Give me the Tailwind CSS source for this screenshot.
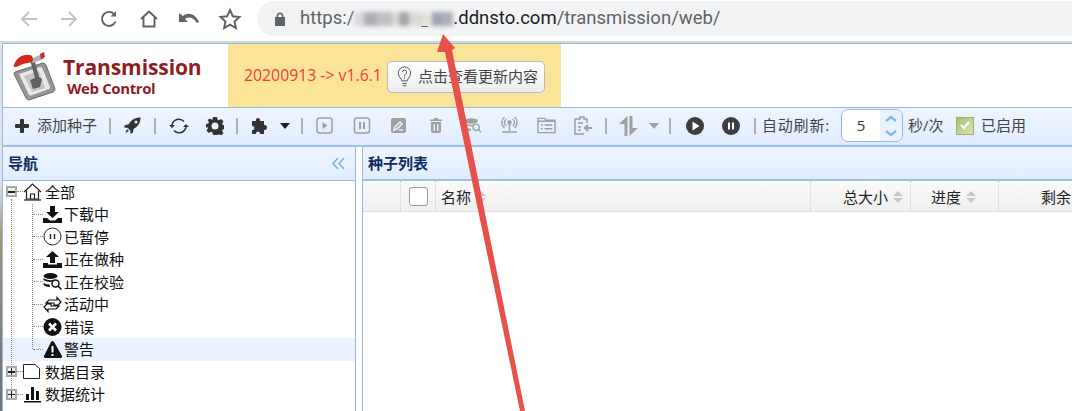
<!DOCTYPE html>
<html lang="en">
<head>
  <meta charset="UTF-8">
  <title>Transmission Web Control</title>
  <script src="https://cdn.jsdelivr.net/npm/@tailwindcss/browser@4"></script>
</head>
<body class="relative w-[1072px] h-[411px] overflow-hidden bg-white font-['Open_Sans','Noto_Sans_CJK_SC',sans-serif]">
  <!-- browser bar -->
  <div class="flex h-[41px] items-start pt-px bg-white">
    <div class="flex w-[257px] h-[35px] items-center text-[#5f6368]">
      <svg class="ml-[19px] w-[20px] h-[20px]" viewBox="0 0 20 20" fill="none" stroke="#bdc1c6" stroke-width="1.8"><path d="M18 10H3M10 3l-7 7 7 7"/></svg>
      <svg class="ml-[20px] w-[20px] h-[20px]" viewBox="0 0 20 20" fill="none" stroke="#bdc1c6" stroke-width="1.8"><path d="M2 10h15M10 3l7 7-7 7"/></svg>
      <svg class="ml-[20px] w-[20px] h-[20px]" viewBox="0 0 20 20" fill="none" stroke="#5f6368" stroke-width="1.9"><path d="M16.5 12.5A7 7 0 1 1 15 5"/><path d="M17 2v5.500h-5.500" fill="#5f6368" stroke="none"/></svg>
      <svg class="ml-[20px] w-[20px] h-[20px]" viewBox="0 0 20 20" fill="none" stroke="#5f6368" stroke-width="1.9"><path d="M2 10l8-7.500L18 10M4.500 8v9.500h11V8"/></svg>
      <svg class="ml-[18px] w-[24px] h-[20px]" viewBox="0 0 24 20" fill="#5f6368"><path d="M2 4v9h9L8 10c4-3 9-1 12 4l2-1C19 6 12 2 6 7z"/></svg>
      <svg class="ml-[17px] w-[24px] h-[24px]" viewBox="0 0 24 24" fill="none" stroke="#5f6368" stroke-width="2"><path d="M12 3l2.800 6.200 6.700.7-5 4.600 1.400 6.600L12 17.700l-5.900 3.400 1.400-6.600-5-4.600 6.700-.7z"/></svg>
    </div>
    <div class="flex flex-1 h-[35px] items-center rounded-l-full bg-[#f1f3f4] pl-[17px] text-[18.500px] font-['Roboto',sans-serif]">
      <svg class="w-[12px] h-[14px] mr-[14px]" viewBox="0 0 12 14" fill="#5f6368"><path d="M2.500 5V4a3.500 3.500 0 0 1 7 0v1H11v9H1V5zM4 5h4V4a2 2 0 0 0-4 0z"/></svg>
      <span class="text-[#5f6368]">https:/</span>
      <span class="relative w-[99px] h-[16px]">
        <span class="flex h-[14px] mt-px blur-[2px]">
          <span class="w-[10px] bg-[#d8d8dc]"></span>
          <span class="w-[13px] bg-[#aeaeb6]"></span>
          <span class="w-[15px] bg-[#c2bec2]"></span>
          <span class="w-[7px] bg-[#dadada]"></span>
          <span class="w-[10px] bg-[#a6a6a6]"></span>
          <span class="w-[13px] bg-[#dadad6]"></span>
          <span class="w-[10px] bg-[#e6e1da]"></span>
          <span class="w-[10px] bg-[#9ea6b2]"></span>
          <span class="w-[11px] bg-[#aeaeb6]"></span>
        </span>
        <span class="absolute left-[67px] top-[15px] w-[7px] h-px bg-[#666]"></span>
      </span>
      <span class="text-[#202124]">.ddnsto.com</span><span class="text-[#5f6368]">/transmission/web/</span>
    </div>
  </div>
  <div class="h-[2px] bg-[#d4d6d8]"></div>

  <div class="flex">
    <div class="w-[2px] h-[368px] bg-gradient-to-b from-[#e0e4e8] from-[38%] via-[#9c9a72] via-[52%] to-[#6f7270]"></div>
    <div class="w-[1070px] border-l border-[#95b8e7]">
      <!-- header -->
      <div class="flex h-[65px] border-y border-[#95b8e7] bg-white">
        <div class="flex w-[225px] items-center">
          <svg class="ml-[9px] w-[44px] h-[52px] blur-[0.300px]" viewBox="0 0 44 52">
            <path d="M3 22l28-9q2 0 3 2l9 24q0 2-2 3L17 50q-2 0-3-2L2 24q0-1 1-2z" fill="#969696" stroke="#6a6a6a" stroke-width="1"/>
            <path d="M7 24l21-7q2 0 2.500 1.500L38 37q0 1.500-1 2l-18 6.500q-2 0-2.500-1.500z" fill="#e8e8e8"/>
            <path d="M12 26l15-5 6 17-13 4z" fill="#c4c4c4"/>
            <path d="M18 10l4-2 5 19 3 2-2 8-7 2-3-9 5-2z" fill="#626262"/>
            <path d="M19 9l11-5 2 5-12 4z" fill="#b0b0b0"/>
            <path d="M2 15C4 8 11 4 17 5c3 0 4 2 4 5l-1 2-9 2c-3 1-6 3-8 3q-2 0-1-2z" fill="#d5281f"/>
            <path d="M28 4l4-2 1 5-4 2z" fill="#cc2a22"/>
          </svg>
          <div class="ml-[7px] mt-[2px] flex flex-col font-bold text-[#8f1d1f]">
            <span class="text-[21px] leading-[24px] tracking-[-0.1px]">Transmission</span>
            <span class="ml-[4px] text-[15px] leading-[19px] tracking-[-0.4px]">Web Control</span>
          </div>
        </div>
        <div class="flex w-[333px] items-center bg-[#fbe397] pl-[16px]">
          <span class="w-[143px] whitespace-nowrap text-[15.800px] text-[#f33a3a]">20200913 -&gt; v1.6.1</span>
          <div class="mt-[2px] flex h-[32px] w-[158px] items-center rounded-[5px] border border-[#bbb] bg-gradient-to-b from-white to-[#ededed]">
            <svg class="ml-[9px] w-[15px] h-[22px]" viewBox="0 0 16 25" fill="none" stroke="#444" stroke-width="1"><path d="M5 17c0-3-4-4-4-9a7 7 0 0 1 14 0c0 5-4 6-4 9zM5.500 20h5M6 22.500h4"/><path d="M5.500 7a2.500 2.500 0 1 1 3.500 2.500c-1 .5-1 1-1 2.500M8 13v1.500"/></svg>
            <span class="ml-[6px] text-[15px] text-[#444]">点击查看更新内容</span>
          </div>
        </div>
      </div>

      <!-- toolbar -->
      <div class="flex h-[39px] items-center border-b-2 border-[#a0bde8] bg-gradient-to-b from-[#eff5ff] to-[#e0ecff] pb-[2px] text-[15px] text-[#444]">
        <svg class="ml-[12px] w-[14px] h-[14px]" viewBox="0 0 14 14" fill="#333"><path d="M5 1q0-1 1-1h2q1 0 1 1v4h4q1 0 1 1v2q0 1-1 1H9v4q0 1-1 1H6q-1 0-1-1V9H1q-1 0-1-1V6q0-1 1-1h4z"/></svg>
        <span class="ml-[8px]">添加种子</span>
        <span class="ml-[12px] w-[2px] h-[16px] bg-[#b0aea8]"></span>
        <svg class="ml-[13px] w-[17px] h-[17px]" viewBox="0 0 17 17" fill="#333"><path d="M16.500.500C11 .500 7 3 4.500 7.500L1 8 0 10.500l3.500.2 2.800 2.800.2 3.500L9 15.500l.5-3.500C14 9.500 16.500 6 16.500.500zM12 3.500a1.500 1.500 0 1 1 0 3 1.500 1.500 0 0 1 0-3zM3 12l2 2-3.500 2z"/></svg>
        <span class="ml-[13px] w-[2px] h-[16px] bg-[#b0aea8]"></span>
        <svg class="ml-[13px] w-[20px] h-[18px]" viewBox="0 0 20 18" fill="none" stroke="#333" stroke-width="1.500"><path d="M3 8a7 7 0 0 1 12-3.500M17 10a7 7 0 0 1-12 3.500"/><path d="M0 8h6l-3 3zM14 10h6l-3-3z" fill="#333" stroke="none"/></svg>
        <svg class="ml-[17px] w-[18px] h-[18px]" viewBox="0 0 18 18" fill="#333"><path fill-rule="evenodd" d="M7 0h4l.5 2.500 1.500.7 2.200-1.300 2.300 2.600-1.400 2 .5 1.500 2.400.5v3.500l-2.400.5-.5 1.500 1.400 2-2.300 2.600-2.200-1.300-1.500.7L11 18H7l-.5-2.500-1.500-.7-2.200 1.300L.5 13.500l1.400-2-.5-1.500L0 10.500V7l2.400-.5.5-1.500-1.400-2L3.800 1.500 6 2.800l.5-.3zM9 5.500a3.500 3.500 0 1 0 0 7 3.500 3.500 0 0 0 0-7z"/></svg>
        <span class="ml-[12px] w-[2px] h-[16px] bg-[#b0aea8]"></span>
        <svg class="ml-[13px] w-[19px] h-[19px]" viewBox="0 0 19 19" fill="#333"><path d="M1 5h4c-1-4 5-4 4 0h4v4c4-1 4 6 0 5v4H9c1-3-5-3-4 0H1v-4c3 1 3-5 0-4z"/></svg>
        <span class="ml-[10px] w-0 h-0 border-x-[5.500px] border-t-[6px] border-x-transparent border-t-[#222]"></span>
        <span class="ml-[11px] w-[2px] h-[16px] bg-[#b0aea8]"></span>
        <svg class="ml-[13px] w-[17px] h-[17px]" viewBox="0 0 17 17" fill="none" stroke="#a0a0a0" stroke-width="1.500"><rect x="1" y="1" width="15" height="15" rx="2.500"/><path d="M6.500 5l5 3.500-5 3.500z" fill="#a0a0a0" stroke="none"/></svg>
        <svg class="ml-[20px] w-[18px] h-[17px]" viewBox="0 0 17 17" fill="none" stroke="#a0a0a0" stroke-width="1.500"><rect x="1" y="1" width="15" height="15" rx="2.500"/><path d="M6.500 5v7M10.500 5v7" stroke-width="2"/></svg>
        <svg class="ml-[20px] w-[15px] h-[15px]" viewBox="0 0 15 15"><rect width="15" height="15" rx="2" fill="#a0a0a0"/><path d="M3 12l1-3 5-5 2 2-5 5zM8 12h4" stroke="#eaf1ff" stroke-width="1.500" fill="none"/></svg>
        <svg class="ml-[24px] w-[12px] h-[15px]" viewBox="0 0 12 15" fill="#a0a0a0"><path d="M0 1.500h4V0h4v1.500h4V3H0zM1 4h10v9q0 2-2 2H3q-2 0-2-2zM3.500 6v7h1.500V6zM7 6v7h1.500V6z"/></svg>
        <svg class="ml-[22px] w-[18px] h-[15px]" viewBox="0 0 20 16" fill="#a0a0a0"><ellipse cx="8" cy="3" rx="7.500" ry="3"/><path d="M.5 5c2 2 8 3 11 1.500L9 9C5 9 2 8 .5 7zM.5 10c2 1 5 1.500 7 1.500L8 14c-4 0-7-1-7.500-2.500z"/><circle cx="13.500" cy="10" r="3.500" fill="none" stroke="#a0a0a0" stroke-width="1.500"/><path d="M16 12.500l3 3" stroke="#a0a0a0" stroke-width="1.500"/></svg>
        <svg class="ml-[19px] w-[17px] h-[17px]" viewBox="0 0 17 17" fill="none" stroke="#a0a0a0" stroke-width="1.400"><circle cx="8.500" cy="5.500" r="1.500" fill="#a0a0a0"/><path d="M5.500 9a4 4 0 0 1 0-7M11.500 9a4 4 0 0 0 0-7M3.500 11a7 7 0 0 1 0-11M13.500 11a7 7 0 0 0 0-11M8.500 7v7M1 15h15"/></svg>
        <svg class="ml-[19px] w-[19px] h-[17px]" viewBox="0 0 20 17" fill="none" stroke="#a0a0a0" stroke-width="1.500"><path d="M1 16V1h7l1.500 2H19v13zM1 4h18"/><path d="M4 8h2M4 12h2M8 8h8M8 12h8"/></svg>
        <svg class="ml-[18px] w-[18px] h-[19px]" viewBox="0 0 18 19" fill="none" stroke="#a0a0a0" stroke-width="1.500"><path d="M13 7V3h-3V1H6v2H1v15h9M4 7h5M4 11h3M4 14h3"/><path d="M18 12h-7M14 9l-3 3 3 3" stroke-width="2"/></svg>
        <span class="ml-[13px] w-[2px] h-[16px] bg-[#b0aea8]"></span>
        <svg class="ml-[12px] w-[19px] h-[20px]" viewBox="0 0 19 20" fill="#a0a0a0"><path d="M8.500 0v20h-3V8H0zM10.500 0h3v12H19l-8.500 8z"/></svg>
        <span class="ml-[11px] w-0 h-0 border-x-[5.500px] border-t-[6px] border-x-transparent border-t-[#a0a0a0]"></span>
        <span class="ml-[10px] w-[2px] h-[16px] bg-[#b0aea8]"></span>
        <svg class="ml-[15px] w-[18px] h-[18px]" viewBox="0 0 18 18"><circle cx="9" cy="9" r="9" fill="#3d3d3d"/><path d="M6.500 4.500l7 4.500-7 4.500z" fill="#fff"/></svg>
        <svg class="ml-[18px] w-[18px] h-[18px]" viewBox="0 0 18 18"><circle cx="9" cy="9" r="9" fill="#3d3d3d"/><path d="M7 5.500v7M11 5.500v7" stroke="#fff" stroke-width="2"/></svg>
        <span class="ml-[14px] w-[2px] h-[16px] bg-[#b0aea8]"></span>
        <span class="ml-[6px] w-[79px] whitespace-nowrap tracking-[0.8px]">自动刷新:</span>
        <div class="flex h-[33px] w-[62px] rounded-[7px] border border-[#95b8e7] bg-white overflow-hidden">
          <span class="flex-1 text-center leading-[31px] text-[#333]">5</span>
          <div class="flex w-[22px] flex-col items-center justify-center gap-[8px] bg-[#e9f1fd]">
            <svg class="w-[12px] h-[7px]" viewBox="0 0 12 7" fill="none" stroke="#7db8ee" stroke-width="2.400"><path d="M1 6l5-4 5 4"/></svg>
            <svg class="w-[12px] h-[7px]" viewBox="0 0 12 7" fill="none" stroke="#7db8ee" stroke-width="2.400"><path d="M1 1l5 4 5-4"/></svg>
          </div>
        </div>
        <span class="ml-[5px] w-[48px]">秒/次</span>
        <div class="flex w-[18px] h-[18px] items-center justify-center border border-[#9db26f] bg-gradient-to-br from-[#a7c06f] to-[#d9e5b8]">
          <svg class="w-[12px] h-[11px]" viewBox="0 0 12 11" fill="none" stroke="#fff" stroke-width="2"><path d="M2 5l3 3 5-6"/></svg>
        </div>
        <span class="ml-[7px]">已启用</span>
      </div>

      <!-- panels -->
      <div class="flex">
        <div class="relative w-[353px] h-[264px] border-r border-[#95b8e7]">
          <div class="flex h-[34px] items-center justify-between border-b border-[#95b8e7] bg-gradient-to-b from-[#eff5ff] to-[#e0ecff] pl-[5px] pr-[10px]">
            <span class="text-[15px] font-bold text-[#0e2d5f]">导航</span>
            <svg class="w-[13px] h-[13px]" viewBox="0 0 13 13" fill="none" stroke="#6fa8e6" stroke-width="1.300"><path d="M6 1L1 6.500 6 12M12 1L7 6.500l5 5.500"/></svg>
          </div>
          <!-- tree connector lines -->
          <div class="absolute left-[8px] top-[52px] h-[196px] border-l border-dotted border-[#888]"></div>
          <div class="absolute left-[29px] top-[57px] h-[145px] border-l border-dotted border-[#888]"></div>
          <div class="-mt-[0.500px] flex flex-col text-[15px] text-[#111]">
            <div class="flex h-[22.500px] items-center">
              <span class="relative ml-[3px] flex w-[11px] h-[11px] items-center justify-center border-2 border-[#aaa] bg-[#eee]"><span class="w-[7px] h-[1.500px] bg-[#222]"></span></span>
              <span class="w-[6px] border-t border-dotted border-[#888]"></span>
              <svg class="w-[19px] h-[18px]" viewBox="0 0 19 18" fill="none" stroke="#222" stroke-width="1.200"><path d="M1 9l8.500-8L18 9M3.500 8v8h12V8M7.500 16v-5h4v5"/><path d="M1 17h17"/></svg>
              <span class="ml-[3px]">全部</span>
            </div>
            <div class="flex h-[22.500px] items-center">
              <span class="ml-[30px] w-[10px] border-t border-dotted border-[#888]"></span>
              <svg class="w-[19px] h-[17px]" viewBox="0 0 19 17" fill="#111"><path d="M7 0h5v6h4l-6.500 6L3 6h4zM0 12h4l3 2.500h5L15 12h4v5H0z"/></svg>
              <span class="ml-[2px]">下载中</span>
            </div>
            <div class="flex h-[22.500px] items-center">
              <span class="ml-[30px] w-[10px] border-t border-dotted border-[#888]"></span>
              <svg class="w-[19px] h-[19px]" viewBox="0 0 19 19" fill="none" stroke="#222" stroke-width="1"><circle cx="9.500" cy="9.500" r="8.500"/><path d="M7.500 7v5M11.500 7v5" stroke-width="1.400"/></svg>
              <span class="ml-[2px]">已暂停</span>
            </div>
            <div class="flex h-[22.500px] items-center">
              <span class="ml-[30px] w-[10px] border-t border-dotted border-[#888]"></span>
              <svg class="w-[19px] h-[17px]" viewBox="0 0 19 17" fill="#111"><path d="M9.500 0L16 6h-4v6H7V6H3zM0 12h5v1.500h9V12h5v5H0z"/></svg>
              <span class="ml-[2px]">正在做种</span>
            </div>
            <div class="flex h-[22.500px] items-center">
              <span class="ml-[30px] w-[10px] border-t border-dotted border-[#888]"></span>
              <svg class="w-[19px] h-[17px]" viewBox="0 0 19 17" fill="#111"><ellipse cx="7.500" cy="3" rx="7" ry="3"/><path d="M.5 5c2 2 8 3 11 1.500L8 9C5 9 2 8 .5 7zM.5 10c2 1 4 1.500 6 1.500L7 14c-4 0-6-1-6.500-2.500z"/><circle cx="12.500" cy="10.500" r="3.500" fill="none" stroke="#111" stroke-width="1.500"/><path d="M15 13l3.500 3.500" stroke="#111" stroke-width="1.500"/></svg>
              <span class="ml-[2px]">正在校验</span>
            </div>
            <div class="flex h-[22.500px] items-center">
              <span class="ml-[30px] w-[10px] border-t border-dotted border-[#888]"></span>
              <svg class="w-[19px] h-[17px]" viewBox="0 0 19 17" fill="none" stroke="#111" stroke-width="1.200"><path d="M4 8L1 11l4 4.500V13h8l3-3h-8V8zM15 9l3-3-4-4.500V4H6L3 7h8v2z"/></svg>
              <span class="ml-[2px]">活动中</span>
            </div>
            <div class="flex h-[22.500px] items-center">
              <span class="ml-[30px] w-[10px] border-t border-dotted border-[#888]"></span>
              <svg class="w-[19px] h-[18px]" viewBox="0 0 19 18"><circle cx="9.500" cy="9" r="9" fill="#111"/><path d="M6 5.500l7 7M13 5.500l-7 7" stroke="#fff" stroke-width="2.600"/></svg>
              <span class="ml-[2px]">错误</span>
            </div>
            <div class="flex h-[22.500px] items-center bg-[#eaf2ff]">
              <span class="ml-[30px] w-[10px] border-t border-dotted border-[#888]"></span>
              <svg class="w-[19px] h-[17px]" viewBox="0 0 19 17"><path d="M9.500 0q1 0 1.500 1l8 14q.5 2-1.500 2h-15q-2 0-1.500-2L8 1q.5-1 1.500-1z" fill="#111"/><path d="M9.500 5v6.500M9.500 13v2" stroke="#fff" stroke-width="2"/></svg>
              <span class="ml-[2px]">警告</span>
            </div>
            <div class="flex h-[22.500px] items-center">
              <span class="relative ml-[3px] flex w-[11px] h-[11px] items-center justify-center border-2 border-[#aaa] bg-[#eee]"><span class="w-[7px] h-[1.500px] bg-[#222]"></span><span class="absolute h-[7px] w-[1.500px] bg-[#222]"></span></span>
              <span class="w-[6px] border-t border-dotted border-[#888]"></span>
              <svg class="w-[19px] h-[17px]" viewBox="0 0 19 17" fill="none" stroke="#222" stroke-width="1"><path d="M.5 15.500V1.500H12l4.500 4v10z"/></svg>
              <span class="ml-[3px]">数据目录</span>
            </div>
            <div class="flex h-[22.500px] items-center">
              <span class="relative ml-[3px] flex w-[11px] h-[11px] items-center justify-center border-2 border-[#aaa] bg-[#eee]"><span class="w-[7px] h-[1.500px] bg-[#222]"></span><span class="absolute h-[7px] w-[1.500px] bg-[#222]"></span></span>
              <span class="w-[6px] border-t border-dotted border-[#888]"></span>
              <svg class="w-[19px] h-[17px]" viewBox="0 0 19 17" fill="#111"><path d="M3 8h3v6H3zM8 1h3v13H8zM13 5h3v9h-3zM1 15h17v1.500H1z"/></svg>
              <span class="ml-[3px]">数据统计</span>
            </div>
          </div>
        </div>
        <div class="ml-[6px] flex-1 h-[264px] border-l border-[#95b8e7]">
          <div class="flex h-[34px] items-center border-b-2 border-[#a0bde8] bg-gradient-to-b from-[#eff5ff] to-[#e0ecff] pl-[5px]">
            <span class="text-[15px] font-bold text-[#0e2d5f]">种子列表</span>
          </div>
          <div class="flex h-[31px] items-center border-b border-[#ddd] bg-gradient-to-b from-[#fafafa] to-[#efefef] text-[15px] text-[#222]">
            <div class="h-full w-[38px] border-r border-dotted border-[#ccc]"></div>
            <div class="flex h-full w-[35px] items-center justify-center border-r border-dotted border-[#ccc]"><span class="w-[19px] h-[19px] rounded-[3px] border border-[#999] bg-white"></span></div>
            <div class="flex h-full w-[375px] items-center border-r border-dotted border-[#ccc] pl-[5px] pt-[2px]">名称
              <span class="ml-[5px] flex flex-col gap-[2px]"><span class="w-0 h-0 border-x-[5.500px] border-b-[5px] border-x-transparent border-b-[#c8c8c8]"></span><span class="w-0 h-0 border-x-[5.500px] border-t-[5px] border-x-transparent border-t-[#c8c8c8]"></span></span>
            </div>
            <div class="flex h-full w-[100px] items-center justify-end border-r border-dotted border-[#ccc] pr-[7px] pt-[2px]">总大小
              <span class="ml-[5px] flex flex-col gap-[2px]"><span class="w-0 h-0 border-x-[5.500px] border-b-[5px] border-x-transparent border-b-[#c8c8c8]"></span><span class="w-0 h-0 border-x-[5.500px] border-t-[5px] border-x-transparent border-t-[#c8c8c8]"></span></span>
            </div>
            <div class="flex h-full w-[88px] items-center justify-end border-r border-dotted border-[#ccc] pr-[22px] pt-[2px]">进度
              <span class="ml-[5px] flex flex-col gap-[2px]"><span class="w-0 h-0 border-x-[5.500px] border-b-[5px] border-x-transparent border-b-[#c8c8c8]"></span><span class="w-0 h-0 border-x-[5.500px] border-t-[5px] border-x-transparent border-t-[#c8c8c8]"></span></span>
            </div>
            <div class="flex-1 overflow-hidden whitespace-nowrap pl-[42px] pt-[2px]">剩余</div>
          </div>
        </div>
      </div>
    </div>
  </div>

  <!-- annotation arrow -->
  <svg class="absolute left-0 top-0 w-[1072px] h-[411px] pointer-events-none" viewBox="0 0 1072 411" fill="#e8504a">
    <path d="M443 34L455 48 452 50 525 411H520L445 52 437 52z"/>
  </svg>
</body>
</html>
